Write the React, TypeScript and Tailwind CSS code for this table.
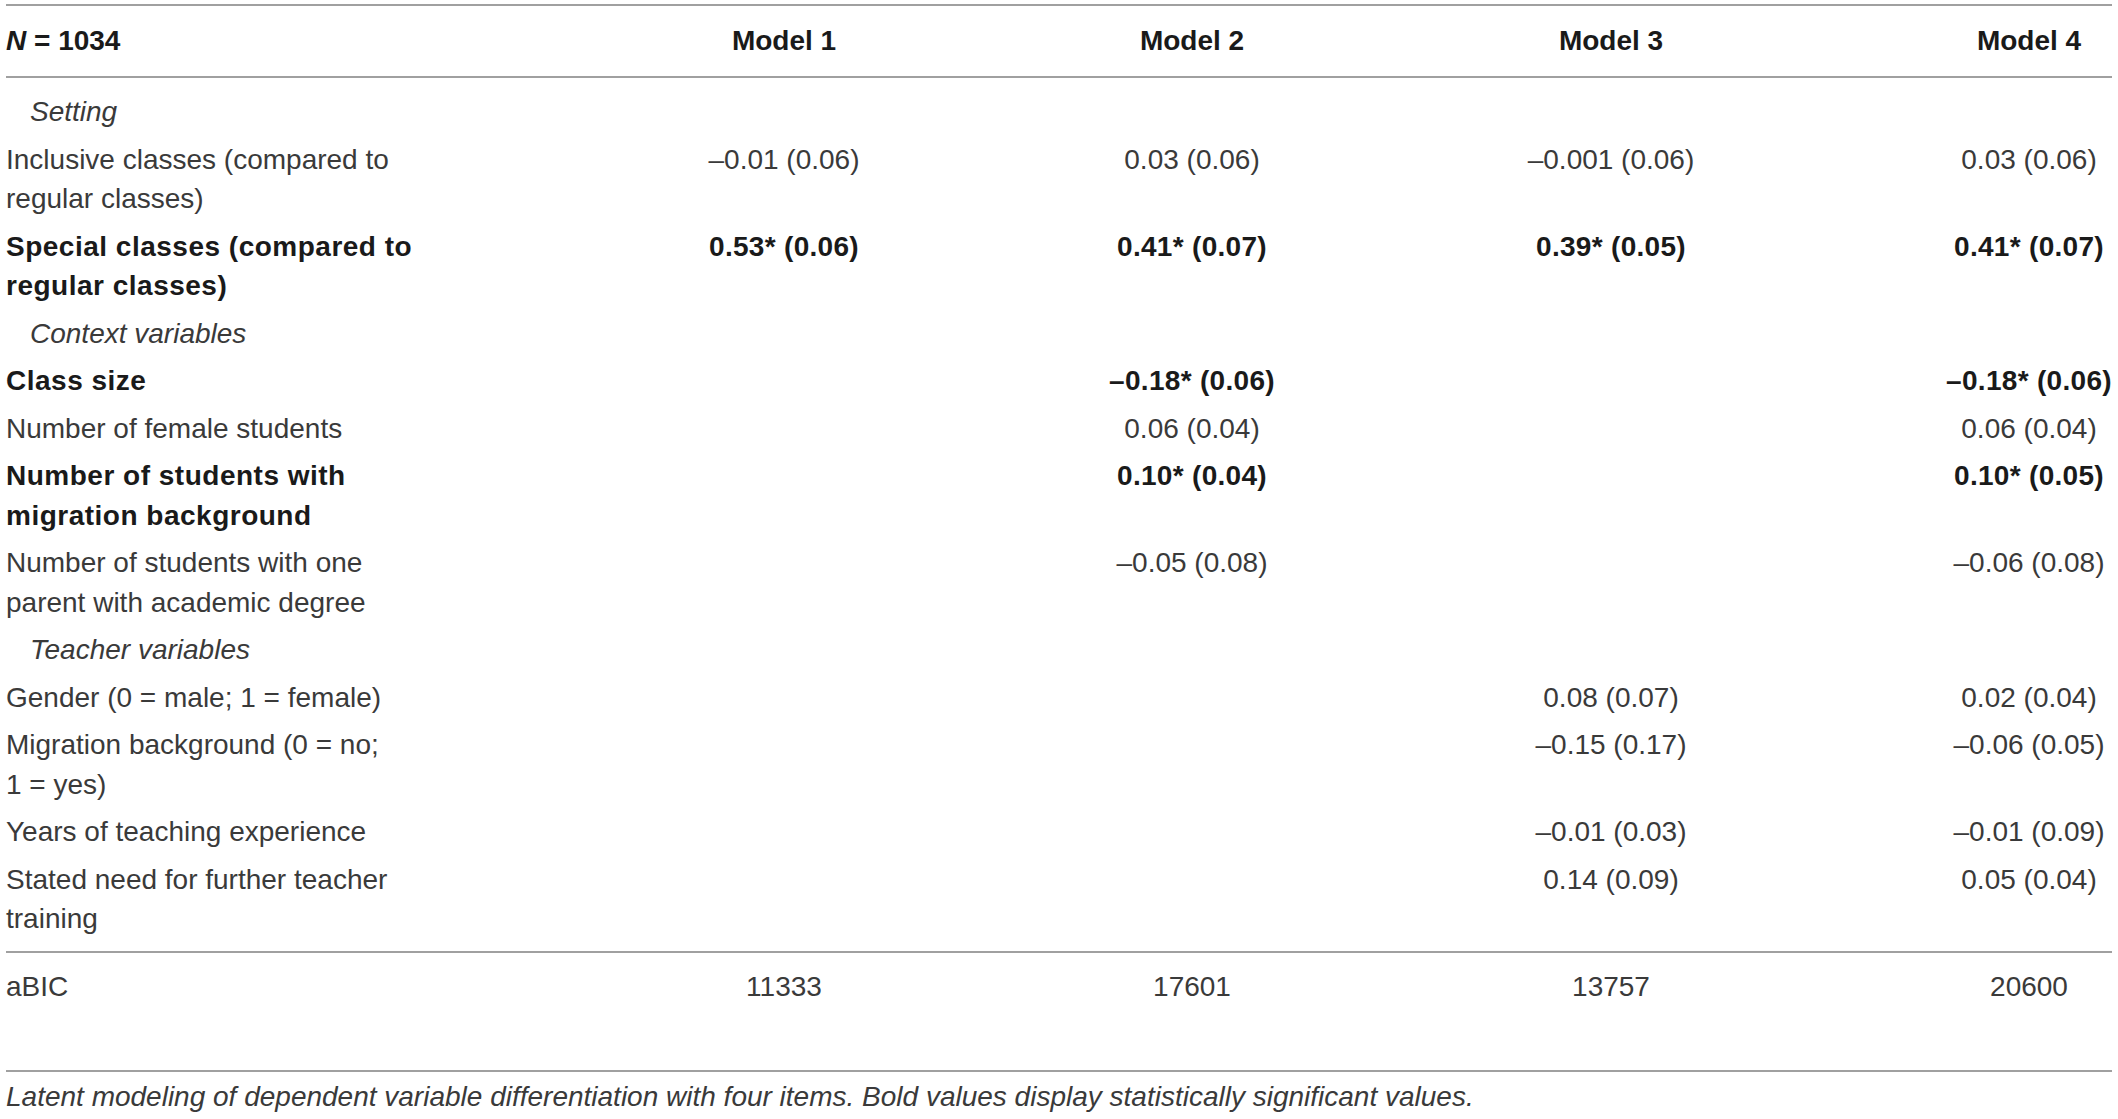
type Row = {
  label: string[];
  section?: boolean;
  bold?: boolean;
  values?: string[];
};

const rows: Row[] = [
  { label: ['Setting'], section: true },
  {
    label: ['Inclusive classes (compared to', 'regular classes)'],
    values: ['–0.01 (0.06)', '0.03 (0.06)', '–0.001 (0.06)', '0.03 (0.06)'],
  },
  {
    label: ['Special classes (compared to', 'regular classes)'],
    bold: true,
    values: ['0.53* (0.06)', '0.41* (0.07)', '0.39* (0.05)', '0.41* (0.07)'],
  },
  { label: ['Context variables'], section: true },
  { label: ['Class size'], bold: true, values: ['', '–0.18* (0.06)', '', '–0.18* (0.06)'] },
  { label: ['Number of female students'], values: ['', '0.06 (0.04)', '', '0.06 (0.04)'] },
  {
    label: ['Number of students with', 'migration background'],
    bold: true,
    values: ['', '0.10* (0.04)', '', '0.10* (0.05)'],
  },
  {
    label: ['Number of students with one', 'parent with academic degree'],
    values: ['', '–0.05 (0.08)', '', '–0.06 (0.08)'],
  },
  { label: ['Teacher variables'], section: true },
  { label: ['Gender (0 = male; 1 = female)'], values: ['', '', '0.08 (0.07)', '0.02 (0.04)'] },
  {
    label: ['Migration background (0 = no;', '1 = yes)'],
    values: ['', '', '–0.15 (0.17)', '–0.06 (0.05)'],
  },
  { label: ['Years of teaching experience'], values: ['', '', '–0.01 (0.03)', '–0.01 (0.09)'] },
  {
    label: ['Stated need for further teacher', 'training'],
    values: ['', '', '0.14 (0.09)', '0.05 (0.04)'],
  },
];

const cols = 'grid grid-cols-[454px_648px_168px_670px_166px]';

function TableRow({ row }: { row: Row }) {
  if (row.section) {
    return (
      <div className={`${cols} py-[4px]`}>
        <div className="pl-[24px] italic">{row.label[0]}</div>
      </div>
    );
  }
  return (
    <div className={`${cols} py-[4px] ${row.bold ? 'font-bold text-[#1a1a1a]' : ''}`}>
      <div className={row.bold ? 'tracking-[0.5px]' : ''}>
        {row.label.map((line) => (
          <div key={line}>{line}</div>
        ))}
      </div>
      {row.values?.map((v, i) => (
        <div key={i} className={`flex justify-center whitespace-nowrap ${row.bold ? 'tracking-[0.3px]' : ''}`}>
          {v}
        </div>
      ))}
    </div>
  );
}

export default function App() {
  return (
    <div className="min-h-screen bg-white px-[6px] pt-[4px] font-['Liberation_Sans',Arial,sans-serif] text-[28px] leading-[39.5px] text-[#3a3a3a]">
      <div className="w-[2106px]">
        {/* header */}
        <div className={`${cols} h-[74px] items-center border-y-2 border-[#a0a0a0] font-bold text-[#1a1a1a]`}>
          <div>
            <span className="italic">N</span> = 1034
          </div>
          <div className="flex justify-center">Model 1</div>
          <div className="flex justify-center">Model 2</div>
          <div className="flex justify-center">Model 3</div>
          <div className="flex justify-center">Model 4</div>
        </div>

        {/* body */}
        <div className="pt-[10px] pb-[8.5px]">
          {rows.map((row) => (
            <TableRow key={row.label[0]} row={row} />
          ))}
        </div>

        {/* fit index */}
        <div className="h-[121px] border-y-2 border-[#a0a0a0] pt-[14px]">
          <div className={cols}>
            <div>aBIC</div>
            <div className="flex justify-center">11333</div>
            <div className="flex justify-center">17601</div>
            <div className="flex justify-center">13757</div>
            <div className="flex justify-center">20600</div>
          </div>
        </div>

        <p className="pt-[5px] italic">
          Latent modeling of dependent variable differentiation with four items. Bold values display
          statistically significant values.
        </p>
      </div>
    </div>
  );
}
